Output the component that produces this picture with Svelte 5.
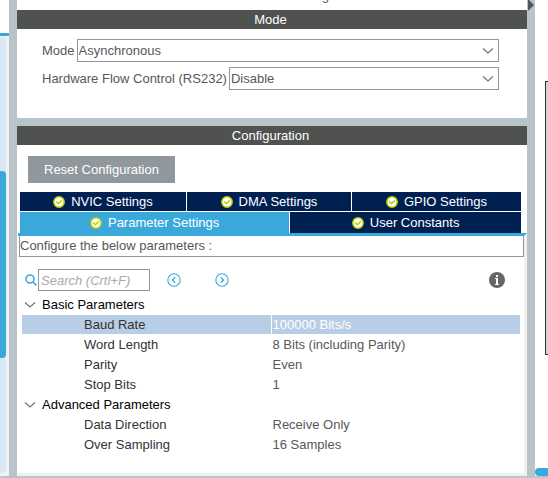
<script>
  const upperTabs = ['NVIC Settings', 'DMA Settings', 'GPIO Settings'];
  const lowerTabs = ['Parameter Settings', 'User Constants'];
  const groups = [
    {
      name: 'Basic Parameters',
      rows: [
        ['Baud Rate', '100000 Bits/s'],
        ['Word Length', '8 Bits (including Parity)'],
        ['Parity', 'Even'],
        ['Stop Bits', '1'],
      ],
    },
    {
      name: 'Advanced Parameters',
      rows: [
        ['Data Direction', 'Receive Only'],
        ['Over Sampling', '16 Samples'],
      ],
    },
  ];
  let activeTab = $state('Parameter Settings');
  let selected = $state('Baud Rate');
  let closed = $state({});
</script>

{#snippet chevron()}
  <svg class="chevron" width="12" height="6" viewBox="0 0 12 6" aria-hidden="true">
    <path d="M1 0.5 L6 5 L11 0.5" fill="none" stroke="#707478" stroke-width="1.2" />
  </svg>
{/snippet}

{#snippet tab(name)}
  <button class="tab" class:active={activeTab === name} role="tab" aria-selected={activeTab === name} onclick={() => (activeTab = name)}>
    <svg width="12" height="12" viewBox="0 0 12 12" aria-hidden="true">
      <circle cx="6" cy="6" r="5.2" fill="#fff" stroke="#bccf00" stroke-width="1.5" />
      <path d="M3.2 5.6 L5.4 7.8 L8.8 4.4" fill="none" stroke="#bccf00" stroke-width="1.5" />
    </svg>
    <span>{name}</span>
  </button>
{/snippet}

<div class="app">
  <div class="workspace">
    <aside class="rail">
      <div class="rail-head"></div>
      <div class="track"><div class="thumb"></div></div>
    </aside>

    <main>
      <div class="title"><span>USART2 Mode and Configuration</span></div>
      <section class="mode">
        <h2>Mode</h2>
        <div class="fields">
          <div class="field">
            <label for="mode">Mode</label>
            <div class="select">
              <select id="mode"><option>Asynchronous</option></select>
              {@render chevron()}
            </div>
          </div>
          <div class="field">
            <label for="flow">Hardware Flow Control (RS232)</label>
            <div class="select">
              <select id="flow"><option>Disable</option></select>
              {@render chevron()}
            </div>
          </div>
        </div>
      </section>

      <section class="config">
        <h2>Configuration</h2>
        <button class="reset">Reset Configuration</button>
        <div class="tabs" role="tablist">
          <div class="upper">{#each upperTabs as name}{@render tab(name)}{/each}</div>
          <div class="lower">{#each lowerTabs as name}{@render tab(name)}{/each}</div>
        </div>
        <div class="panel">
          <p>Configure the below parameters :</p>
          <div class="tools">
            <svg width="12" height="12" viewBox="0 0 12 12" aria-hidden="true">
              <circle cx="5" cy="5" r="4" fill="none" stroke="#3ba8dc" stroke-width="1.6" />
              <path d="M8 8 L11.3 11.3" stroke="#3ba8dc" stroke-width="1.7" />
            </svg>
            <input type="text" aria-label="Search" placeholder="Search (Crtl+F)" />
            <button class="icon prev" aria-label="Previous">
              <svg width="14" height="14" viewBox="0 0 14 14">
                <circle cx="7" cy="7" r="6.2" fill="none" stroke="#3ba8dc" stroke-width="1.1" />
                <path d="M8.2 4.2 L5.5 7 L8.2 9.8" fill="none" stroke="#3ba8dc" stroke-width="1.3" />
              </svg>
            </button>
            <button class="icon next" aria-label="Next">
              <svg width="14" height="14" viewBox="0 0 14 14">
                <circle cx="7" cy="7" r="6.2" fill="none" stroke="#3ba8dc" stroke-width="1.1" />
                <path d="M5.8 4.2 L8.5 7 L5.8 9.8" fill="none" stroke="#3ba8dc" stroke-width="1.3" />
              </svg>
            </button>
            <button class="icon info" aria-label="Information">
              <svg width="16" height="16" viewBox="0 0 16 16">
                <circle cx="8" cy="8" r="8" fill="#666" />
                <path d="M7 3h2v2H7zM6 6h3v6h1v1H6v-1h1V7H6z" fill="#fff" />
              </svg>
            </button>
          </div>
          <table>
            <tbody>
              {#each groups as group}
                <tr class="group">
                  <th colspan="2">
                    <button aria-expanded={!closed[group.name]} onclick={() => (closed[group.name] = !closed[group.name])}>
                      {@render chevron()}<span>{group.name}</span>
                    </button>
                  </th>
                </tr>
                {#if !closed[group.name]}
                  {#each group.rows as [name, value]}
                    <tr class:selected={selected === name} onclick={() => (selected = name)}>
                      <th scope="row">{name}</th>
                      <td>{value}</td>
                    </tr>
                  {/each}
                {/if}
              {/each}
            </tbody>
          </table>
        </div>
      </section>
    </main>

    <div class="divider">
      <svg width="6" height="12" viewBox="0 0 6 12" aria-hidden="true"><path d="M0 -1 L6 5 L0 11z" fill="#555" /></svg>
    </div>
    <div class="canvas">
      <div class="chip"></div>
      <div class="scroll"></div>
    </div>
  </div>
</div>

<style>
  :global(body) {
    margin: 0;
    background: #b8c4ca;
  }
  .app {
    box-sizing: border-box;
    min-height: 100vh;
    padding-bottom: 2px;
    display: flex;
    background: #b8c4ca;
    color: #55585c;
    font: 13px/19px 'Liberation Sans', Arial, sans-serif;
  }
  button, input, select {
    font: inherit;
    color: inherit;
    margin: 0;
    padding: 0;
    border: 0;
    border-radius: 0;
    background: none;
  }
  svg {
    display: block;
    flex: none;
  }
  .workspace {
    flex: 1;
    display: grid;
    grid-template-columns: 9px minmax(0, 1fr) 8px 13px;
  }
  .rail {
    display: flex;
    flex-direction: column;
    background: #f0f1f3;
    padding-bottom: 3px;
  }
  .rail-head {
    height: 33px;
    background: #fff;
    border-bottom: 3px solid #3ba8dc;
    margin-bottom: 1px;
  }
  .track {
    flex: 1;
    width: 6px;
    padding-top: 134px;
    box-sizing: border-box;
    background: #d8e8f5;
    border-radius: 0 4px 4px 0;
  }
  .thumb {
    height: 62%;
    background: #3ba8dc;
    border-radius: 0 4px 4px 0;
  }
  main {
    display: flex;
    flex-direction: column;
    border-left: 8px solid #b8c4ca;
  }
  .title {
    height: 10px;
    box-sizing: border-box;
    padding-bottom: 5px;
    background: #fff;
    overflow: hidden;
    display: flex;
    align-items: flex-end;
    justify-content: center;
  }
  h2 {
    margin: 0;
    font: inherit;
    text-align: center;
    color: #fff;
    background: #505250;
    padding-right: 3px;
  }
  section {
    background: #fff;
  }
  .mode {
    margin-bottom: 8px;
  }
  .fields {
    padding: 10px 28px 28px 25px;
    display: flex;
    flex-direction: column;
    gap: 5px;
  }
  .field {
    display: flex;
    align-items: center;
    gap: 2px;
  }
  .select {
    flex: 1;
    position: relative;
  }
  select {
    display: block;
    width: 100%;
    height: 23px;
    box-sizing: border-box;
    border: 1px solid #8f969c;
    padding: 0 20px 0 1px;
    appearance: none;
  }
  .select .chevron {
    position: absolute;
    right: 5px;
    top: 9px;
    pointer-events: none;
  }
  .config {
    flex: 1;
    display: flex;
    flex-direction: column;
  }
  .reset {
    align-self: flex-start;
    margin: 11px 11px 9px;
    padding: 4px 16px;
    color: #fff;
    background: #90979d;
  }
  .tabs {
    margin: 0 6px 0 3px;
    display: grid;
    gap: 1px;
  }
  .upper, .lower {
    display: grid;
    gap: 1px;
  }
  .upper {
    grid-template-columns: 166fr 164fr 169fr;
  }
  .lower {
    grid-template-columns: 7fr 6fr;
  }
  .tab {
    display: flex;
    align-items: center;
    justify-content: center;
    gap: 6px;
    color: #fff;
    background: #002052;
  }
  .lower .tab {
    padding: 1px 0;
  }
  .tab.active {
    background: #3ba8dc;
  }
  .panel {
    flex: 1;
    margin-left: 1px;
    border-top: 3px solid #3ba8dc;
    border-right: 3px solid #f0f1f3;
    border-bottom: 3px solid #f0f1f3;
  }
  p {
    margin: 0 0 0 1px;
    padding-bottom: 1px;
    border: 1px solid #8f969c;
    border-top: 0;
  }
  .tools {
    display: flex;
    align-items: center;
    padding: 12px 19px 4px 7px;
  }
  input {
    width: 112px;
    height: 22px;
    box-sizing: border-box;
    margin-left: 1px;
    padding: 0 2px;
    border: 1px solid #8f969c;
    font-style: italic;
  }
  input::placeholder {
    color: #aaa;
    opacity: 1;
  }
  .prev {
    margin-left: 17px;
  }
  .next {
    margin-left: 34px;
  }
  .info {
    margin-left: auto;
  }
  table {
    width: calc(100% - 8px);
    margin: 0 4px;
    border-collapse: collapse;
    table-layout: fixed;
  }
  th, td {
    height: 19px;
    padding: 0;
    border-bottom: 1px solid #fff;
    font-weight: normal;
    text-align: left;
  }
  th {
    padding-left: 62px;
    color: #333;
  }
  td {
    padding-left: 1px;
    border-left: 1px solid #fff;
  }
  .group th {
    padding-left: 2px;
  }
  .group button {
    display: flex;
    align-items: center;
    gap: 6px;
    color: #000;
  }
  .selected {
    background: #b8cee6;
  }
  .selected td {
    color: #fff;
  }
  .divider svg {
    margin-left: 1px;
  }
  .canvas {
    background: #fff;
    display: flex;
    flex-direction: column;
    justify-content: space-between;
    padding-top: 81px;
  }
  .chip {
    height: 272px;
    margin-left: 10px;
    border: 1px solid #333;
    border-right: 0;
    background: #d0d5d8;
  }
  .scroll {
    height: 8px;
    background: #3ba8dc;
    border-radius: 4px 0 0 4px;
  }
</style>
